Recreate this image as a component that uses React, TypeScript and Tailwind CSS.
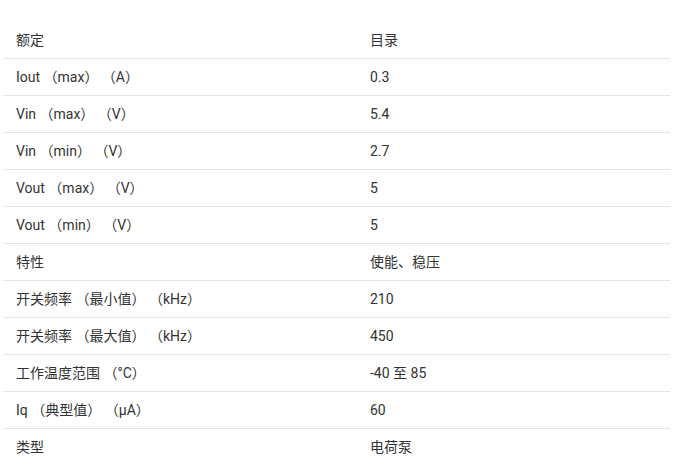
import React from 'react';

const rows: [string, string][] = [
  ['额定', '目录'],
  ['Iout （max） （A）', '0.3'],
  ['Vin （max） （V）', '5.4'],
  ['Vin （min） （V）', '2.7'],
  ['Vout （max） （V）', '5'],
  ['Vout （min） （V）', '5'],
  ['特性', '使能、稳压'],
  ['开关频率 （最小值） （kHz）', '210'],
  ['开关频率 （最大值） （kHz）', '450'],
  ['工作温度范围 （°C）', '-40 至 85'],
  ['Iq （典型值） （μA）', '60'],
  ['类型', '电荷泵'],
];

const App: React.FC = () => {
  return (
    <div
      className="min-h-screen bg-white pt-[22px] pl-[3px] text-[14px] text-[#333]"
      style={{ fontFamily: 'Roboto, "Noto Sans CJK SC", sans-serif' }}
    >
      <div className="w-[667px]">
        {rows.map(([label, value], i) => (
          <div
            key={i}
            className="grid grid-cols-[354px_1fr] h-[37px] items-center border-b border-[#e6e6e6]"
          >
            <div className="pl-[13px] whitespace-pre">{label}</div>
            <div className="pl-[13px]">{value}</div>
          </div>
        ))}
      </div>
    </div>
  );
};

export default App;
